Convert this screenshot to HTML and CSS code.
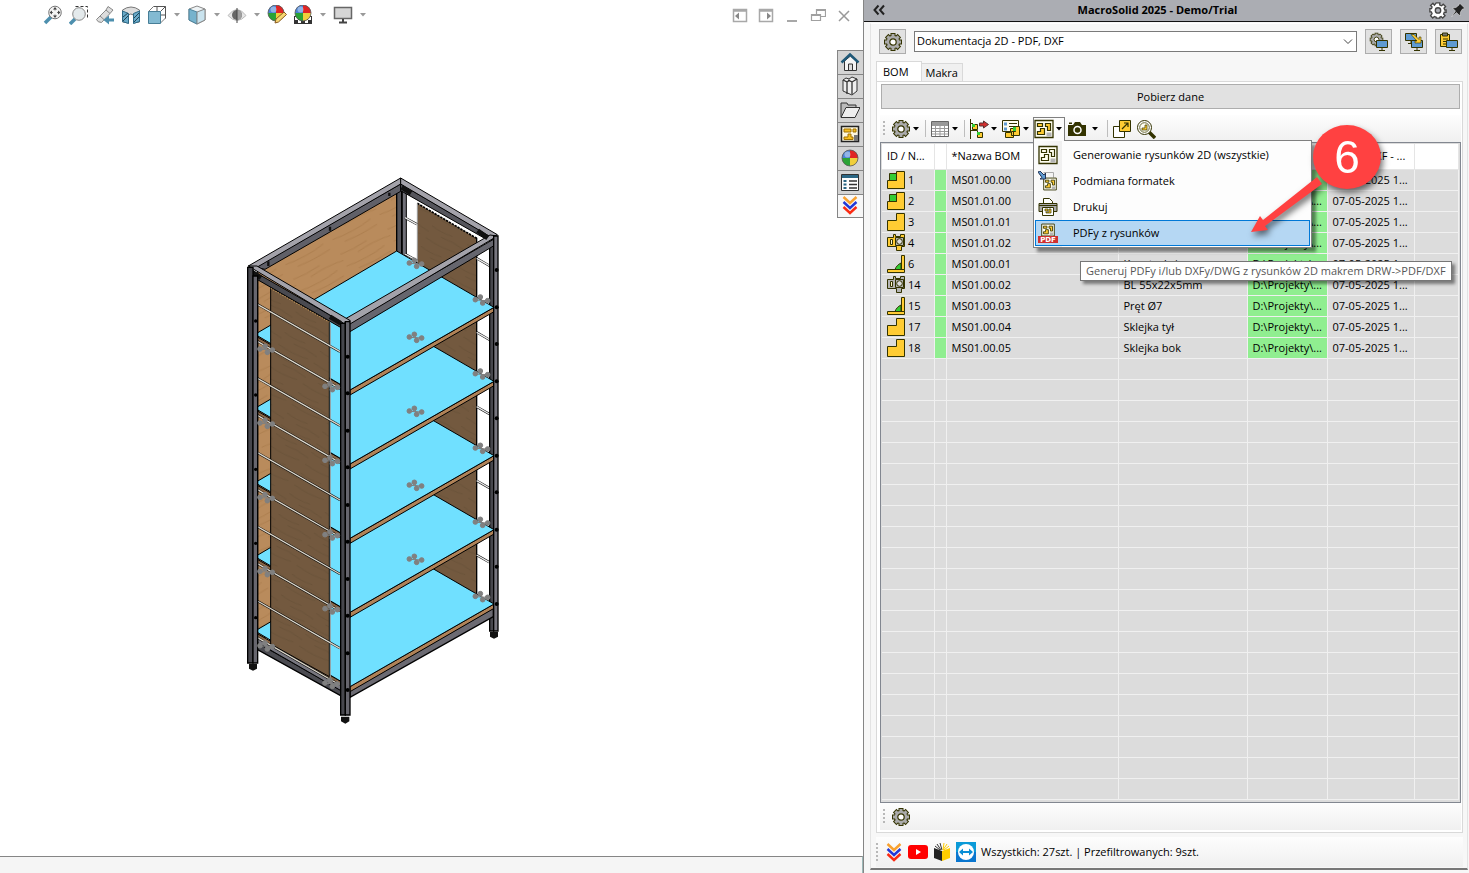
FILE: index.html
```html
<!DOCTYPE html>
<html lang="pl">
<head>
<meta charset="UTF-8">
<title>MacroSolid 2025</title>
<link rel="stylesheet" href="styles.css">
</head>
<body>

<!-- shared icons -->
<svg class="sprite" width="0" height="0">
  <defs>
    <symbol id="i-gear" viewBox="0 0 20 20">
      <g fill="#333300">
        <g id="teeth-dark"><rect x="7.5" y="1" width="5" height="18"/><rect x="1" y="7.5" width="18" height="5"/></g>
        <use href="#teeth-dark" transform="rotate(45 10 10)"/>
        <circle cx="10" cy="10" r="7.2"/>
      </g>
      <g fill="#ababab">
        <g id="teeth-light"><rect x="8.5" y="2" width="3" height="16"/><rect x="2" y="8.5" width="16" height="3"/></g>
        <use href="#teeth-light" transform="rotate(45 10 10)"/>
        <circle cx="10" cy="10" r="6.2"/>
      </g>
      <circle cx="10" cy="10" r="3.2" fill="#fff" stroke="#333300" stroke-width="1.2"/>
    </symbol>
    <symbol id="i-caret" viewBox="0 0 7 4"><path d="M0.5 0h6L3.5 3.5z" fill="currentColor"/></symbol>
    <symbol id="i-screen" viewBox="0 0 13 11">
      <path d="M.5.5h11v7H.5z" fill="#5f9bd2" stroke="#333300"/><path d="M6 8v2M3 10.5h6" stroke="#333300" fill="none"/>
    </symbol>
    <symbol id="i-chevrons" viewBox="0 0 20 20">
      <g fill="none" stroke-width="2.4"><path d="M3.500 2l6.500 6 6.500-6" stroke="#f9a12e"/><path d="M3.500 7l6.500 6 6.500-6" stroke="#2238d8"/><path d="M3.500 12l6.500 6 6.500-6" stroke="#fb2a12"/></g>
    </symbol>
    <symbol id="i-ball" viewBox="0 0 20 20">
      <path d="M10 10V2a8 8 0 0 1 8 8z" fill="#e02424"/><path d="M10 10h8a8 8 0 0 1-8 8z" fill="#f0cf3c"/>
      <path d="M10 10v8a8 8 0 0 1-8-8z" fill="#2aa336"/><path d="M10 10H2a8 8 0 0 1 8-8z" fill="#4a83d6"/>
      <circle cx="7.500" cy="6.500" r="3" fill="#fff" opacity=".4"/><circle cx="10" cy="10" r="8" fill="none" stroke="#555" stroke-width=".8"/>
    </symbol>
    <symbol id="i-drawing" viewBox="0 0 20 20">
      <path d="M1 1.500h18v17H1z" fill="#fffef0" stroke="#333300" stroke-width="1.300"/>
      <path d="M3.500 4.500h5v3h-5zM11.500 4.500h5v7h-3v-4h-2zM6.500 9.500h4v6h-7v-3h3z" fill="var(--part, #ffcc33)" stroke="#333300" stroke-width="1.200"/>
      <path d="M12.500 13.500h5v4h-5z" fill="#b4b4b4"/>
    </symbol>
    <symbol id="i-part" viewBox="0 0 20 20"><path d="M1.500 18.500v-10h9v-7h8v17z" fill="#ffcc33" stroke="#333300"/></symbol>
    <symbol id="i-assembly" viewBox="0 0 20 20">
      <path d="M1.500 18.500v-8h9v-9h8v17z" fill="#ffcc33" stroke="#333300"/><path d="M3.500 3.500h7v7h-7z" fill="#33cc33" stroke="#333300"/>
    </symbol>
    <symbol id="i-sheet" viewBox="0 0 20 20">
      <path d="M1.500 4.500h6v-3h2v2h5v-2h4v12h-3v4h-5v-4h-9z" fill="var(--part, #ffcc33)" stroke="#333300"/>
      <path d="M4.500 6.500h2v5h-2z" fill="#fff6cc" stroke="#333300"/><path d="M9.500 4.500h8v8h-8z" fill="#b4b4b4" stroke="#333300"/>
      <circle cx="13.500" cy="8.500" r="2.800" fill="#ddd" stroke="#333300"/>
    </symbol>
    <symbol id="i-weld" viewBox="0 0 20 20">
      <path d="M15.500 1.500h3v14h-3zM1.500 15.500h17v3h-17z" fill="#ffcc33" stroke="#333300"/><path d="M9 15.500c1-3 3-5 6-6.500v6.500z" fill="#33cc33" stroke="#333300"/>
    </symbol>
    <symbol id="i-panel" viewBox="0 0 16 16"><path d="M1.500 2.500h13v12h-13zM1 4h14" fill="none" stroke="#a8a8a8" stroke-width="1.500"/></symbol>
    <pattern id="wood-light" width="160" height="90" patternUnits="userSpaceOnUse" patternTransform="rotate(-28)">
      <rect width="160" height="90" fill="#b98b5c"/><path d="M0 12q40 6 90 0M50 30q50-8 110 2M0 52q70 10 130-2M30 74q50 6 110 0" fill="none" stroke="#a87a4a" stroke-width="2"/>
    </pattern>
    <pattern id="wood-dark" width="120" height="70" patternUnits="userSpaceOnUse" patternTransform="rotate(28)">
      <rect width="120" height="70" fill="#73593f"/><path d="M0 10q30 6 70 0M40 28q40-6 80 2M0 50q50 8 100-2" fill="none" stroke="#665037" stroke-width="2"/>
    </pattern>
  </defs>
</svg>

<main class="viewport">
  <header class="view-bar">
    <div class="view-tools">
      <button class="flat" aria-label="Zoom"><svg viewBox="0 0 20 20" width="20" height="20"><path d="M2 18l6-6" stroke="#4d8fae" stroke-width="3.500"/><circle cx="12" cy="7.500" r="6.300" fill="#f4f4f4" stroke="#777"/><path d="M12 3.500v8M8 7.500h8" stroke="#777" stroke-dasharray="2 4"/><path d="M12 2l2 2.500h-4zM12 13l2-2.500h-4zM6.500 7.500L9 5.500v4zM17.500 7.500L15 5.500v4z" fill="#444"/></svg></button>
      <button class="flat" aria-label="Zoom area"><svg viewBox="0 0 20 20" width="20" height="20"><path d="M6.500 1.500h12v12" fill="none" stroke="#333" stroke-dasharray="3 2"/><path d="M1 19l5-5" stroke="#4d8fae" stroke-width="3.500"/><circle cx="10" cy="9" r="6.300" fill="#e4eaec" stroke="#888"/></svg></button>
      <button class="flat" aria-label="Previous view"><svg viewBox="0 0 20 20" width="20" height="20"><path d="M1.500 14.500L11 5l2-3.500 5 3.500-3 3.500-8.500 9q-4 0-5-3z" fill="#ddd" stroke="#888"/><path d="M5 11l4.500 4M11 5l4 3.500" stroke="#888"/><path d="M19 13.500h-5v-3L8.500 15l5.500 4.500v-3h5z" fill="#4d8fae"/></svg></button>
      <button class="flat" aria-label="Section"><svg viewBox="0 0 20 20" width="20" height="20"><path d="M1.500 5q8.500-6 17 0v12l-6 1V10q-3-2-5 0v8l-6-1z" fill="#ddd" stroke="#777"/><path d="M1.500 6l6 2.500v10l-6-2zM12.500 8.500l6-2.500v10.500l-6 2z" fill="#69aac9" stroke="#2c6885"/><path d="M2 12l5-4M2 16l5-5M13 13l5-5M13 17l5-5" stroke="#245"/></svg></button>
      <button class="flat" aria-label="Orientation"><svg viewBox="0 0 20 20" width="20" height="20"><path d="M6.500 1.500h12v12M18.500 1.500l-5 5M10 2v4M14 10h4" fill="none" stroke="#555"/><path d="M1.500 6.500l5-5M13.500 18l5-5" stroke="#777"/><path d="M1.500 6.500h12v12h-12z" fill="#83bad2" stroke="#477e97"/></svg></button>
      <svg class="caret caret-view"><use href="#i-caret"/></svg>
      <button class="flat" aria-label="Display style"><svg viewBox="0 0 20 20" width="20" height="20"><path d="M2 4l8-3 8 3v11l-8 4-8-4z" fill="#eef3f5" stroke="#888"/><path d="M2 4l8 3v12l-8-4z" fill="#77b3cd" stroke="#4c849d"/><path d="M10 7l8-3v11l-8 4z" fill="#c9e3ee" stroke="#888"/></svg></button>
      <svg class="caret caret-view"><use href="#i-caret"/></svg>
      <button class="flat" aria-label="Hide or show"><svg viewBox="0 0 20 20" width="20" height="20"><path d="M1 10.500q9-12 18 0-9 10-18 0z" fill="#e6e6e6" stroke="#bbb"/><circle cx="10" cy="10" r="5" fill="#666"/><path d="M10 5a5 5 0 0 1 0 10z" fill="#a0a0a0"/><path d="M10 3v15" stroke="#444"/></svg></button>
      <svg class="caret caret-view"><use href="#i-caret"/></svg>
      <button class="flat" aria-label="Appearance"><svg viewBox="0 0 20 20" width="20" height="20"><use href="#i-ball" x="-1" y="-2"/><path d="M8 18l1-4 8-7 2.500 2.500-8 7.500z" fill="#f7d873" stroke="#8a5b20"/></svg></button>
      <button class="flat" aria-label="Scene"><svg viewBox="0 0 20 20" width="20" height="20"><path d="M1 11h18v8H1z" fill="#333"/><path d="M2 12h3v3H2zM15 12h3v3h-3zM5 15h3v3H5zM12 15h3v3h-3z" fill="#fff"/><use href="#i-ball" y="-2"/></svg></button>
      <svg class="caret caret-view"><use href="#i-caret"/></svg>
      <button class="flat" aria-label="View settings"><svg viewBox="0 0 20 20" width="20" height="20"><path d="M1.500 2.500h17v11h-17z" fill="#d6d6d6" stroke="#666" stroke-width="1.500"/><path d="M10 14v3M6 17.500h8" stroke="#444" stroke-width="2"/></svg></button>
      <svg class="caret caret-view"><use href="#i-caret"/></svg>
    </div>
    <div class="window-tools">
      <button class="flat" aria-label="Left"><svg viewBox="0 0 16 16" width="16" height="16"><use href="#i-panel"/><path d="M7 5.500v7L3 9z" fill="#888"/></svg></button>
      <button class="flat" aria-label="Right"><svg viewBox="0 0 16 16" width="16" height="16"><use href="#i-panel"/><path d="M9 5.500v7L13 9z" fill="#888"/></svg></button>
      <button class="flat" aria-label="Minimize"><svg viewBox="0 0 16 16" width="16" height="16"><path d="M3 14h10" stroke="#a8a8a8" stroke-width="2"/></svg></button>
      <button class="flat" aria-label="Restore"><svg viewBox="0 0 16 16" width="16" height="16"><path d="M6.500 7V2.500h9v7H11M1.500 7.500h9v6h-9zM1.500 8.500h9M6.500 3.500h9" fill="none" stroke="#a0a0a0" stroke-width="1.200"/></svg></button>
      <button class="flat" aria-label="Close"><svg viewBox="0 0 16 16" width="16" height="16"><path d="M3 4l10 10M13 4L3 14" stroke="#999" stroke-width="1.500"/></svg></button>
    </div>
  </header>

  <div class="scene">
    <svg class="model" viewBox="0 0 825 1680" width="275" height="560">
      <defs>
        <g id="shelf" stroke="#000" stroke-width="3" stroke-linejoin="round">
          <path d="M60 497L345 660v13L60 510z" fill="#8a6544"/>
          <path d="M345 660L777 412v13L345 675z" fill="#b08257"/>
          <path d="M485 243L777 412 345 660 60 493z" fill="#70e0ff"/>
        </g>
        <g id="rod"><path d="M62 400l253 145" stroke="#000" stroke-width="7"/><path d="M62 400l253 145" stroke="#ddd8cc" stroke-width="4"/></g>
        <g id="rod-short"><path d="M725 265l38 22" stroke="#000" stroke-width="7"/><path d="M725 265l38 22" stroke="#eee" stroke-width="4"/></g>
        <g id="clip" fill="#808080" stroke="#808080" stroke-width="3"><path d="M-17 0L20 2M-2-9L5 8"/><circle cx="-17" cy="-1" r="7"/><circle cx="-2" cy="-9" r="7"/><circle cx="20" cy="2" r="7"/><circle cx="5" cy="9" r="7"/></g>
        <g id="side-clips"><use href="#clip" x="92" y="538"/><use href="#clip" x="287" y="650"/></g>
        <g id="holes"><circle cx="62" cy="453" r="5"/><circle cx="338" cy="560" r="6"/><circle cx="338" cy="670" r="6"/><circle cx="785" cy="300" r="6"/><circle cx="785" cy="412" r="6"/></g>
      </defs>
      <!-- back walls -->
      <path d="M485 65L68 305v1110l417-240z" fill="url(#wood-light)" stroke="#000" stroke-width="3"/>
      <path d="M547 100l178 105v1100l-178-100z" fill="url(#wood-dark)"/>
      <path d="M547 100l178 105" stroke="#000" stroke-width="5" stroke-dasharray="7 3"/>
      <path d="M547 100v190" stroke="#999" stroke-width="3"/><path d="M725 203v1130" stroke="#000" stroke-width="4"/>
      <path d="M485 60h15v1000h-15z" fill="#55555b" stroke="#000" stroke-width="4"/><path d="M502 60h12v1000h-12z" fill="#707078" stroke="#000" stroke-width="3"/>
      <path d="M510 143l36 20M510 252l36 20" stroke="#000" stroke-width="7"/><path d="M510 143l36 20M510 252l36 20" stroke="#eee" stroke-width="4"/>
      <use href="#rod-short"/><use href="#rod-short" y="222"/><use href="#rod-short" y="445"/><use href="#rod-short" y="667"/><use href="#rod-short" y="890"/>
      <!-- the shelf corners lie over the inner face of the right post -->
      <path d="M764 210h12v1173h-12z" fill="#47474d" stroke="#000" stroke-width="4"/>
      <!-- bottom frame and shelves, lowest first -->
      <path d="M62 1415l260 148v17L62 1436z" fill="#4b4b51" stroke="#000" stroke-width="4"/>
      <path d="M345 1562l430-248v26L345 1582z" fill="#6b6a72" stroke="#000" stroke-width="4"/>
      <use href="#shelf" y="890"/><use href="#shelf" y="667"/><use href="#shelf" y="445"/><use href="#shelf" y="222"/><use href="#shelf"/>
      <path d="M68 1403l250 145v14L68 1418z" fill="#77767f" stroke="#000" stroke-width="3"/>
      <!-- side wall -->
      <path d="M107 352l176 102v1066l-176-98z" fill="url(#wood-dark)" stroke="#000" stroke-width="3"/>
      <path d="M108 354l176 101" stroke="#c79a5e" stroke-width="6" stroke-dasharray="4 4"/><path d="M286 458v1065" stroke="#999" stroke-width="3"/>
      <use href="#rod"/><use href="#rod" y="111"/><use href="#rod" y="222"/><use href="#rod" y="333"/><use href="#rod" y="445"/><use href="#rod" y="556"/><use href="#rod" y="667"/><use href="#rod" y="778"/><use href="#rod" y="890"/><use href="#rod" y="1000"/>
      <!-- top frame -->
      <g stroke="#000" stroke-width="3">
        <path d="M60 292L497 42v22L90 298z" fill="#606068"/><path d="M40 288L497 24v18L62 294z" fill="#a3a2aa"/>
        <path d="M497 42l275 160v16L497 62z" fill="#55555c"/><path d="M497 24l290 170-18 8L497 42z" fill="#a3a2aa"/>
        <path d="M337 462l440-255v20L345 485z" fill="#66666e"/><path d="M325 450L765 195l22 3-442 264z" fill="#a3a2aa"/>
        <path d="M45 298l285 163-12 12L45 316z" fill="#4a4a50"/><path d="M40 288l26 0 280 164-20 8z" fill="#a3a2aa"/>
      </g>
      <path d="M500 52l28 18M728 182l30 22M50 305l28 18M285 440l32 20" stroke="#111" stroke-width="14"/>
      <path d="M285 170v12M100 274v14M463 68v10" stroke="#111" stroke-width="7"/>
      <!-- posts -->
      <g stroke="#000" stroke-width="4">
        <path d="M38 292h16v1187H38z" fill="#47474d"/><path d="M54 318h14v1161H54z" fill="#67666e"/>
        <path d="M317 460h14v1175h-14z" fill="#47474d"/><path d="M331 455h14v1180h-14z" fill="#67666e"/>
        <path d="M776 198h13v1185h-13z" fill="#77767f"/>
      </g>
      <path d="M42 1482h24v14l-12 6-12-6zM318 1640h25v14l-12 7-13-7zM765 1386h24v14l-12 6-12-6z" fill="#111"/>
      <use href="#holes"/><use href="#holes" y="222"/><use href="#holes" y="445"/><use href="#holes" y="667"/><use href="#holes" y="890"/>
      <use href="#clip" x="540" y="280"/><use href="#clip" x="540" y="502"/><use href="#clip" x="540" y="724"/><use href="#clip" x="540" y="946"/><use href="#clip" x="540" y="1168"/>
      <use href="#clip" x="738" y="390"/><use href="#clip" x="738" y="612"/><use href="#clip" x="738" y="835"/><use href="#clip" x="738" y="1057"/><use href="#clip" x="738" y="1280"/>
      <use href="#side-clips"/><use href="#side-clips" y="222"/><use href="#side-clips" y="445"/><use href="#side-clips" y="667"/><use href="#side-clips" y="890"/>
    </svg>

    <nav class="task-tabs">
      <button class="task-tab" aria-label="Home"><svg viewBox="0 0 20 20" width="20" height="20"><path d="M4.500 9v9.500h12V9L10.500 4z" fill="#f4f4f4" stroke="#333"/><path d="M8.500 18v-6h4v6" fill="#ddd" stroke="#333"/><path d="M1.500 10.500l8.500-8 8.500 8" fill="none" stroke="#1f5877" stroke-width="2.500"/></svg></button>
      <button class="task-tab" aria-label="Library"><svg viewBox="0 0 20 20" width="20" height="20"><path d="M3 4l3-2 3 1 3-2 5 2v12l-5 4-9-4z" fill="#eee" stroke="#333"/><path d="M3 4l4 2v12M7 6l3-2M8 4l4 2v12M12 6l5-3" fill="none" stroke="#333" stroke-width="1.300"/></svg></button>
      <button class="task-tab" aria-label="Files"><svg viewBox="0 0 20 20" width="20" height="20"><path d="M1 17V3h6l1 2h8v3" fill="#bbb" stroke="#333"/><path d="M1 17.500L6 7.500h14l-5 10z" fill="#eee" stroke="#333"/></svg></button>
      <button class="task-tab" aria-label="View palette"><svg viewBox="0 0 20 20" width="20" height="20"><path d="M1.500 2.500h17v15h-17z" fill="#fff8de" stroke="#222" stroke-width="1.500"/><path d="M4 5h7v3H4zM13 5h3v3h-3zM8 10h3v3h2v2.500H4V13h4z" fill="#f8c01f" stroke="#a07000"/><path d="M14 11h4v6h-4z" fill="#777"/></svg></button>
      <button class="task-tab" aria-label="Appearances"><svg width="20" height="20"><use href="#i-ball"/></svg></button>
      <button class="task-tab" aria-label="Properties"><svg viewBox="0 0 20 20" width="20" height="20"><path d="M1.500 2.500h17v16h-17z" fill="#fff" stroke="#333"/><path d="M2 3h16v3H2z" fill="#2c6885"/><path d="M3.500 8h3v2h-3zM3.500 11.500h3v2h-3zM3.500 15h3v2h-3z" fill="#2c6885"/><path d="M9 9h8M9 12.500h8M9 16h8" stroke="#333" stroke-width="1.300"/></svg></button>
      <button class="task-tab active" aria-label="MacroSolid"><svg width="20" height="20"><use href="#i-chevrons"/></svg></button>
    </nav>
  </div>
  <div class="view-status"></div>
</main>

<aside class="panel">
  <header class="panel-title">
    <button class="flat" aria-label="Collapse"><svg viewBox="0 0 14 14" width="14" height="14"><path d="M6.500 2.500L2.500 7l4 4.500M12 2.500L8 7l4 4.500" fill="none" stroke="#222" stroke-width="2"/></svg></button>
    <h1>MacroSolid 2025 - Demo/Trial</h1>
    <button class="flat" aria-label="Options"><svg viewBox="0 0 20 20" width="18" height="18"><g fill="#fff" stroke="#444" stroke-width="1.500"><path d="M8 2h4v2.500l2 .8 1.800-1.700 2.600 2.600L16.700 8l.8 2H19v2.500h-2l-.8 2 1.600 1.800-2.600 2.600-1.800-1.600-1.400.7v1H8v-1l-2-.7-1.800 1.600-2.400-2.600L3.400 14l-.8-2H1V8.500h1.800l.6-2L1.800 5l2.600-2.500L6 4.500z"/><circle cx="10" cy="10.500" r="3" fill="#abadb3"/></g></svg></button>
    <button class="flat" aria-label="Pin"><svg viewBox="0 0 14 14" width="14" height="14"><path d="M8.500 0l5.500 5.500-2.500.5-2 3-.5 4L5.500 9.500.5 14 4.500 8 1.500 5 5 4.500 8 2z" fill="#222" stroke="#eee" stroke-width=".5"/></svg></button>
  </header>

  <div class="panel-body">
    <div class="macro-row">
      <button class="square" aria-label="Ustawienia"><svg width="20" height="20"><use href="#i-gear"/></svg></button>
      <div class="select-box">
        <select aria-label="Zestaw makr"><option>Dokumentacja 2D - PDF, DXF</option></select>
        <svg class="select-arrow" viewBox="0 0 10 6" width="10" height="6"><path d="M1 .5l4 4 4-4" fill="none" stroke="#444"/></svg>
      </div>
      <button class="square" aria-label="Konfiguracja"><svg viewBox="0 0 20 20" width="20" height="20"><use href="#i-gear" width="15" height="15"/><use href="#i-screen" x="7" y="8" width="13" height="11"/></svg></button>
      <button class="square" aria-label="Kopiuj"><svg viewBox="0 0 20 20" width="20" height="20"><use href="#i-screen" x="1" y="1" width="13" height="11"/><use href="#i-screen" x="7" y="8" width="13" height="11"/><path d="M7 2.500h3l5 5V5h2v6h-6V9h2z" fill="#ffcc33" stroke="#333300" stroke-width=".6"/></svg></button>
      <button class="square" aria-label="Schowek"><svg viewBox="0 0 20 20" width="20" height="20"><path d="M1.500 2.500h9v12h-9z" fill="#ffcc33" stroke="#333300"/><path d="M3.500 1h5v3h-5z" fill="#777" stroke="#333300"/><path d="M4 7h5M4 9.500h4M4 12h3" stroke="#333300"/><use href="#i-screen" x="7" y="8" width="13" height="11"/></svg></button>
    </div>

    <div class="tabs" role="tablist">
      <button class="tab active" role="tab">BOM</button>
      <button class="tab" role="tab">Makra</button>
    </div>

    <section class="tab-page">
      <button class="load">Pobierz dane</button>

      <div class="toolbar">
        <span class="grip"></span>
        <button class="tool" aria-label="Ustawienia BOM"><svg width="20" height="20"><use href="#i-gear"/></svg><svg class="caret"><use href="#i-caret"/></svg></button>
        <span class="sep"></span>
        <button class="tool" aria-label="Tabela"><svg viewBox="0 0 20 20" width="20" height="20"><path d="M1.500 2.500h17v15h-17z" fill="#fff" stroke="#666"/><path d="M2 3h16v3H2z" fill="#999"/><path d="M2 6.500h16M2 9.500h16M2 12.500h16M2 15h16M5.500 6v11M10 6v11M14.500 6v11" stroke="#999"/></svg><svg class="caret"><use href="#i-caret"/></svg></button>
        <span class="sep"></span>
        <button class="tool" aria-label="Struktura"><svg viewBox="0 0 20 20" width="20" height="20"><path d="M1.500 0v20M2 4.500h2M2 11.500h6.500v3" fill="none" stroke="#333300"/><path d="M3.500 5.500h5v5h-5zM8.500 13.500h5v5h-5z" fill="#ffcc33" stroke="#333300"/><path d="M3 5h3v3H3zM8 13h3v3H8z" fill="#3c3"/><path d="M10.500 4h4V2l5 3.500-5 3.500V7h-4z" fill="#d22f2f" stroke="#533"/></svg><svg class="caret"><use href="#i-caret"/></svg></button>
        <button class="tool" aria-label="Lista"><svg viewBox="0 0 20 20" width="20" height="20"><path d="M1.500 1.500h16v11h-16z" fill="#fffef0" stroke="#333300"/><path d="M3 3.500h3v3H3zM3 8.500h3v3H3z" fill="#5f9bd2"/><path d="M8 4.500h8M8 7.500h8" stroke="#333300"/><path d="M4.500 18.500v-5h5v-4h3v9zM10.500 16.500v-4h4v-5h4v9z" fill="#ffcc33" stroke="#333300"/><path d="M12 8h3v4h-3z" fill="#3c3"/></svg><svg class="caret"><use href="#i-caret"/></svg></button>
        <div class="drop">
          <button class="tool open" aria-label="Rysunki"><svg width="20" height="20"><use href="#i-drawing"/></svg><svg class="caret"><use href="#i-caret"/></svg></button>
          <div class="menu" role="menu">
            <button role="menuitem"><svg class="plain" width="20" height="20"><use href="#i-drawing"/></svg><span>Generowanie rysunków 2D (wszystkie)</span></button>
            <button role="menuitem"><svg viewBox="0 0 20 20" width="20" height="20"><path d="M5.500 1.500h10v5M5.500 8v4" fill="none" stroke="#aaa"/><use href="#i-drawing" x="4" y="6" width="16" height="14"/><path d="M0 1l2-1 4 4 1.500-2v6H2l2-1.500z" fill="#5f9bd2" stroke="#235"/></svg><span>Podmiana formatek</span></button>
            <button role="menuitem"><svg viewBox="0 0 20 20" width="20" height="20"><path d="M5.500 6V1.500h6l3 3V6" fill="#fff" stroke="#333300"/><path d="M1 6.500h18v8H1z" fill="#aaa" stroke="#333300"/><path d="M1 8.500h18" stroke="#333300"/><path d="M4.500 10.500h11v8h-11z" fill="#fff" stroke="#333300"/><path d="M7 12h3v2H7zM11 12h2v4h-5v-1h3z" fill="#fc3" stroke="#333300" stroke-width=".7"/></svg><span>Drukuj</span></button>
            <button role="menuitem" class="selected"><svg viewBox="0 0 20 20" width="20" height="20"><use href="#i-drawing" x="2" width="16" height="14"/><path d="M0 13h20v7H0z" fill="#d02f2f"/><text class="pdf-label" x="10" y="19">PDF</text></svg><span>PDFy z rysunków</span></button>
          </div>
          <div class="tooltip" role="tooltip">Generuj PDFy i/lub DXFy/DWG z rysunków 2D makrem DRW-&gt;PDF/DXF</div>
          <svg class="callout" viewBox="0 0 140 120" width="140" height="120">
            <path d="M76 52L22 95l-3-4-9 16 17-2-3-4 57-42z" fill="#ff4141"/>
            <ellipse cx="106" cy="32" rx="34" ry="32" fill="#ff4141"/>
            <text x="106" y="48">6</text>
          </svg>
        </div>
        <button class="tool split" aria-label="Zdjęcie"><svg viewBox="0 0 20 20" width="20" height="20"><path d="M1 6h5l2-3h5l2 3h4v11H1zM2 3.500h3V5H2z" fill="#333300"/><circle cx="10.500" cy="11" r="3.500" fill="none" stroke="#fff" stroke-width="1.500"/></svg><svg class="caret"><use href="#i-caret"/></svg></button>
        <span class="sep"></span>
        <button class="tool" aria-label="Otwórz"><svg viewBox="0 0 20 20" width="20" height="20"><path d="M1.500 7.500h11v11h-11z" fill="#fff" stroke="#333300"/><path d="M7.500 1.500h11v11h-11z" fill="#ffcc33" stroke="#333300"/><path d="M10 10l6-6M12 4h4v4" fill="none" stroke="#333300" stroke-width="1.200"/></svg></button>
        <button class="tool last" aria-label="Szukaj"><svg viewBox="0 0 20 20" width="20" height="20"><path d="M13 13l6 6" stroke="#333300" stroke-width="3.500"/><circle cx="8.500" cy="8.500" r="7" fill="#fff" stroke="#333300"/><circle cx="8.500" cy="8.500" r="4.800" fill="#fffef0" stroke="#666633"/><path d="M6 11V9h3V6h2v5z" fill="#fc3" stroke="#333300" stroke-width=".7"/></svg></button>
      </div>

      <div class="grid">
        <table>
          <colgroup><col class="c-id"><col class="c-mark"><col class="c-name"><col class="c-desc"><col class="c-path"><col class="c-date"><col></colgroup>
          <thead><tr><th>ID / N...</th><th></th><th>*Nazwa BOM</th><th></th><th></th><th>Status DXF - ...</th><th></th></tr></thead>
          <tbody id="rows"></tbody>
        </table>
      </div>

      <div class="toolbar foot">
        <span class="grip"></span>
        <button class="tool" aria-label="Ustawienia listy"><svg width="20" height="20"><use href="#i-gear"/></svg></button>
      </div>
    </section>

    <footer class="status">
      <span class="grip"></span>
      <button class="flat" aria-label="MacroSolid"><svg width="20" height="20"><use href="#i-chevrons"/></svg></button>
      <button class="flat" aria-label="YouTube"><svg viewBox="0 0 20 20" width="20" height="20"><rect y="3" width="20" height="14" rx="3" fill="#f00"/><path d="M8 7v6l5-3z" fill="#fff"/></svg></button>
      <button class="flat" aria-label="Pomoc"><svg viewBox="0 0 20 20" width="20" height="20"><path d="M2 6l8 3v10l-8-3z" fill="#222"/><path d="M18 6l-8 3v10l8-3z" fill="#fc0"/><path d="M3 4l5 4M5 2l4 6M8 1l2 7" stroke="#333"/><path d="M17 4l-5 4M15 2l-4 6M12 1l-1 7" stroke="#fc0"/></svg></button>
      <button class="flat" aria-label="TeamViewer"><svg viewBox="0 0 20 20" width="20" height="20"><path d="M0 0h20v20H0z" fill="#0a76cf"/><path d="M0 0h20v10H0z" fill="#0a9ad8"/><circle cx="10" cy="10" r="8" fill="#fff"/><path d="M3 10l4-3.500V9h6V6.500l4 3.500-4 3.500V11H7v2.500z" fill="#0a8ed6"/></svg></button>
      <span class="counts">Wszystkich: 27szt. | Przefiltrowanych: 9szt.</span>
    </footer>
  </div>
</aside>

<script>
const path = 'D:\\Projekty\\...';
const date = '07-05-2025 1...';
const items = [
  ['assembly', '1', 'MS01.00.00', ''],
  ['assembly', '2', 'MS01.01.00', ''],
  ['part', '3', 'MS01.01.01', ''],
  ['sheet', '4', 'MS01.01.02', ''],
  ['weld', '6', 'MS01.00.01', 'Konstrukcja'],
  ['sheet gray', '14', 'MS01.00.02', 'BL 55x22x5mm'],
  ['weld', '15', 'MS01.00.03', 'Pręt Ø7'],
  ['part', '17', 'MS01.00.04', 'Sklejka tył'],
  ['part', '18', 'MS01.00.05', 'Sklejka bok']
];
const total = 30;

let html = '';
for (let i = 0; i < total; i++) {
  const r = items[i];
  if (r) {
    const [icon, tone] = r[0].split(' ');
    html += `<tr><td class="id"><svg class="${tone || ''}" width="20" height="20"><use href="#i-${icon}"/></svg>${r[1]}</td>` +
      `<td class="green"></td><td>${r[2]}</td><td>${r[3]}</td><td class="green">${path}</td><td>${date}</td><td></td></tr>`;
  } else {
    html += '<tr>' + '<td></td>'.repeat(7) + '</tr>';
  }
}
document.getElementById('rows').innerHTML = html;
</script>

</body>
</html>
```
FILE: styles.css
```css
* {
  box-sizing: border-box;
}
body {
  margin: 0;
  height: 100vh;
  display: flex;
  overflow: hidden;
  background: #fff;
  color: #000;
  font: 11px/16px "Open Sans", "Noto Sans", sans-serif;
}
button {
  margin: 0;
  padding: 0;
  border: 0;
  background: none;
  color: inherit;
  font: inherit;
}
svg {
  display: block;
  flex: none;
}
.sprite {
  position: absolute;
}
.caret {
  width: 7px;
  height: 4px;
}

/* model view */
.viewport {
  flex: 1;
  min-width: 0;
  display: flex;
  flex-direction: column;
  border-right: 1px solid #858585;
}
.view-bar {
  display: flex;
  justify-content: space-between;
  padding: 5px 11px 0 43px;
}
.view-tools {
  display: flex;
  align-items: center;
  gap: 6px;
}
.caret-view {
  width: 8px;
  color: #999;
}
.window-tools {
  display: flex;
  align-items: center;
  gap: 10px;
}
.scene {
  flex: 1;
  display: flex;
  justify-content: space-between;
  padding-top: 25px;
}
.model {
  margin: 120px 0 0 235px;
}
.task-tabs {
  width: 26px;
}
.task-tab {
  width: 100%;
  height: 24px;
  display: flex;
  align-items: center;
  justify-content: center;
  padding: 0 1px 2px 0;
  border: 1px solid #858585;
  border-width: 1px 0 0 1px;
  background: #d4d4d4;
}
.task-tab.active {
  border-bottom-width: 1px;
  background: #f7f7f7;
}
.view-status {
  height: 17px;
  border-top: 1px solid #858585;
  border-right: 1px solid #9cb8b8;
  background: #f5f5f5;
}

/* side panel */
.panel {
  width: 605px;
  display: flex;
  flex-direction: column;
  background: #f7f7f7;
}
.panel-title {
  height: 22px;
  display: flex;
  align-items: center;
  gap: 4px;
  padding: 0 4px 1px 8px;
  border-bottom: 1px solid #111;
  background: #abadb3;
}
.panel-title h1 {
  flex: 1;
  margin: 0;
  font-size: 11px;
  line-height: 16px;
  text-align: center;
}
.panel-body {
  flex: 1;
  display: flex;
  flex-direction: column;
  margin: 1px 1px 3px 6px;
  padding: 5px 4px 1px 5px;
  border: 1px solid #e3e3e3;
  border-top-color: #fff;
  border-bottom: 2px solid #777;
}
.macro-row {
  display: flex;
  align-items: center;
  gap: 8px;
  padding: 0 1px 0 3px;
}
.square {
  width: 27px;
  height: 25px;
  display: flex;
  align-items: center;
  justify-content: center;
  border: 1px solid #adadad;
  background: #e1e1e1;
}
.select-box {
  flex: 1;
  position: relative;
}
.select-box select {
  display: block;
  width: 100%;
  height: 21px;
  padding: 0 2px 2px;
  border: 1px solid #7a7a7a;
  border-radius: 0;
  appearance: none;
  background: #fff;
  color: #000;
  font: inherit;
}
.select-arrow {
  position: absolute;
  right: 4px;
  top: 8px;
  pointer-events: none;
}
.tabs {
  display: flex;
  align-items: flex-end;
  margin-top: 7px;
}
.tab {
  height: 18px;
  padding: 0 4px;
  border: 1px solid #d9d9d9;
  border-width: 1px 1px 0 0;
  background: #f0f0f0;
}
.tab.active {
  height: 20px;
  padding: 0 12px 0 6px;
  border-left-width: 1px;
  background: #fff;
}
.tab-page {
  flex: 1;
  display: flex;
  flex-direction: column;
  padding: 2px 1px 2px 3px;
  border: 1px solid #d9d9d9;
  background: #fff;
}
.load {
  height: 25px;
  margin: 0 1px;
  border: 1px solid #adadad;
  background: #e1e1e1;
}
.toolbar {
  height: 27px;
  display: flex;
  align-items: center;
  gap: 2px;
  margin-top: 6px;
  padding-left: 3px;
  background: linear-gradient(#fdfdfd, #f0f0f0);
}
.toolbar.foot {
  margin-top: 0;
}
.grip {
  width: 2px;
  height: 15px;
  margin-right: 4px;
  background: repeating-linear-gradient(#b8b8b8 0 2px, transparent 2px 4px);
}
.sep {
  width: 1px;
  height: 17px;
  margin: 0 2px;
  background: #bdbdbd;
}
.tool {
  height: 24px;
  display: flex;
  align-items: center;
}
.tool .caret {
  width: 10px;
}
.tool.split .caret {
  width: 16px;
}
.tool.last {
  margin-left: 2px;
}
.tool.open {
  position: relative;
  z-index: 2;
  border: 1px solid #808080;
  border-bottom: 0;
  background: #fcfcfc;
}

/* drop-down menu */
.drop {
  position: relative;
}
.menu {
  position: absolute;
  z-index: 1;
  top: 23px;
  left: 0;
  width: 279px;
  padding: 1px;
  border: 1px solid #808080;
  background: linear-gradient(90deg, #fcfcfc, #f0f0f0 28px, #fdfdfd 28px);
  box-shadow: 4px 4px 3px rgba(0, 0, 0, .45);
}
.menu button {
  width: 100%;
  height: 26px;
  display: flex;
  align-items: center;
  gap: 15px;
  padding: 0 2px;
  border: 1px solid transparent;
}
.menu .selected {
  border-color: #0078d7;
  background: #b5d7f3;
}
.plain {
  --part: #fffef0;
}
.pdf-label {
  fill: #fff;
  font: bold 7px "DejaVu Sans", sans-serif;
  text-anchor: middle;
}
.tooltip {
  position: absolute;
  z-index: 2;
  top: 144px;
  left: 47px;
  padding: 1px 5px;
  border: 1px solid #767676;
  background: #fff;
  box-shadow: 3px 3px 3px rgba(0, 0, 0, .45);
  color: #575757;
  white-space: nowrap;
}
.callout {
  position: absolute;
  z-index: 3;
  top: 8px;
  left: 208px;
  pointer-events: none;
  filter: drop-shadow(2px 4px 3px rgba(0, 0, 0, .55));
}
.callout text {
  fill: #fff;
  font: 46px "Liberation Sans", Arial, sans-serif;
  text-anchor: middle;
}

/* list of parts */
.grid {
  flex: 1;
  padding: 1px;
  border: 1px solid #828790;
  background: #dcdcdc;
}
table {
  width: 100%;
  table-layout: fixed;
  border-collapse: collapse;
}
.c-id {
  width: 52px;
}
.c-mark {
  width: 12px;
}
.c-name {
  width: 172px;
}
.c-desc {
  width: 129px;
}
.c-path {
  width: 80px;
}
.c-date {
  width: 87px;
}
th,
td {
  height: 21px;
  padding: 0 5px;
  border: solid #f0f0f0;
  border-width: 0 1px 1px 0;
  text-align: left;
  white-space: nowrap;
  overflow: hidden;
}
th {
  height: 25px;
  border-color: #e5e5e5;
  background: #fff;
  font-weight: normal;
}
.green {
  background: #90ee90;
}
.id {
  padding-left: 4px;
}
.id svg {
  float: left;
  margin: -2px 2px -2px 0;
}
.gray {
  --part: #b4b4b4;
}

.status {
  height: 30px;
  display: flex;
  align-items: center;
  gap: 4px;
  margin-top: 4px;
  background: linear-gradient(#fdfdfd, #f0f0f0);
}
.status .grip {
  height: 19px;
  margin-right: 2px;
}
.counts {
  margin-left: 1px;
}
```
